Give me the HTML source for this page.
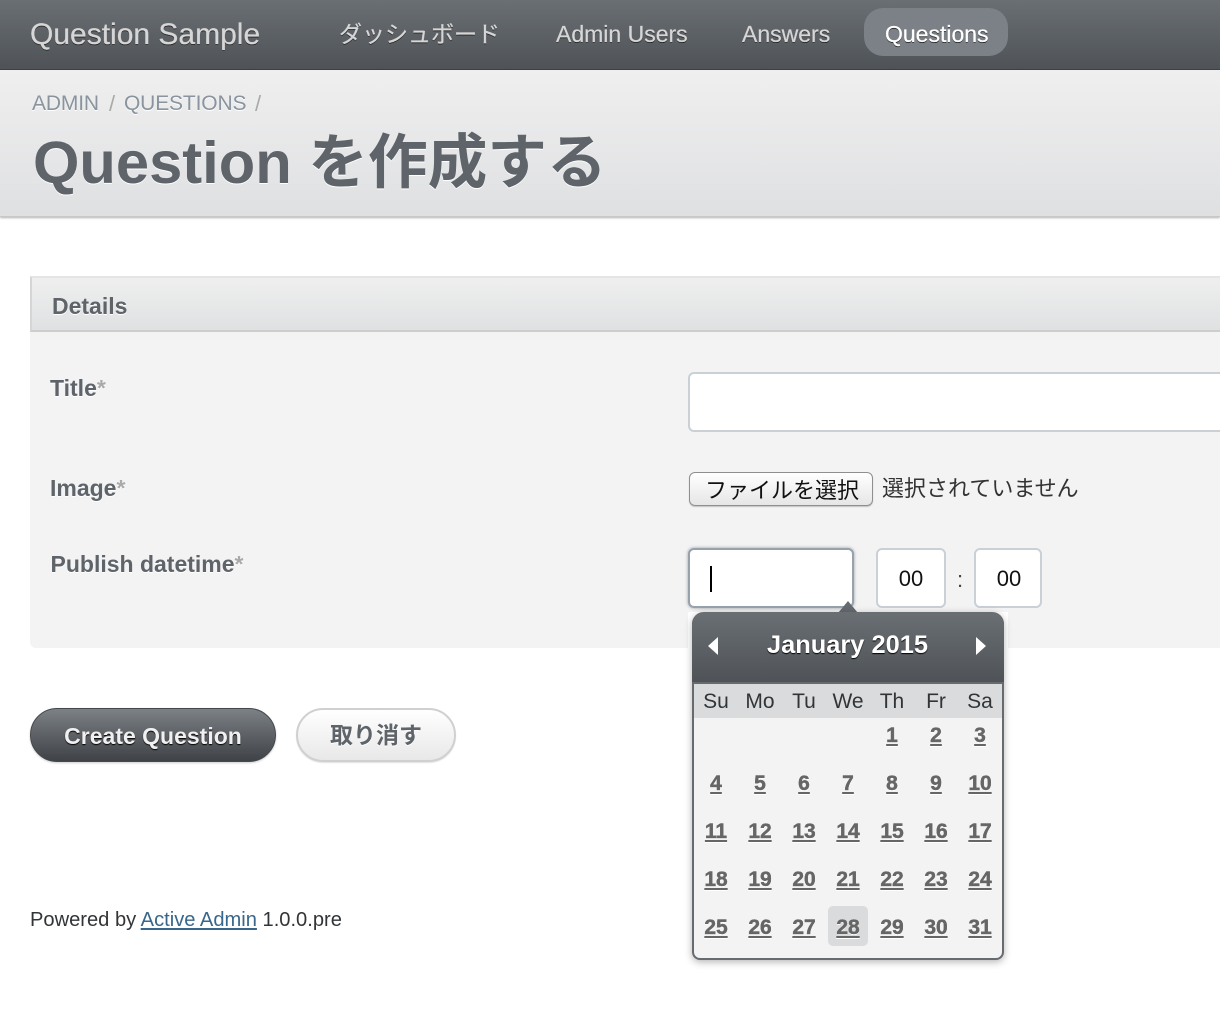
<!DOCTYPE html>
<html lang="ja">
<head>
<meta charset="utf-8">
<title>Question を作成する</title>
<style>
html,body{margin:0;padding:0;background:#fff;}
body{width:1220px;height:1034px;position:relative;overflow:hidden;font-family:"Liberation Sans","Noto Sans CJK JP",sans-serif;color:#323537;}
.a{position:absolute;white-space:nowrap;line-height:1;}
.box{position:absolute;box-sizing:border-box;}
#nav{left:0;top:0;width:1220px;height:70px;background:linear-gradient(#6a6f74,#4f5357);border-bottom:1px solid #3f4245;}
.nv{color:#d6d6d6;text-shadow:0 1px 0 #222;font-size:23px;-webkit-text-stroke:.25px currentColor;}
#tb{left:0;top:70px;width:1220px;height:147px;background:linear-gradient(#efefef,#dfe0e2);border-bottom:1px solid #c8c8c8;box-shadow:0 1px 2px rgba(0,0,0,.3);}
#panel{left:30px;top:276px;width:1200px;height:372px;background:#f3f3f3;border-radius:6px;}
#ph{left:30px;top:276px;width:1200px;height:56px;background:linear-gradient(#efefef,#dfe1e2);border:2px solid #e4e5e6;border-bottom:2px solid #cdcdcd;border-left:2px solid #d6d6d6;}
.lb{color:#5e6469;font-weight:bold;font-size:23px;text-shadow:0 1px 0 #fff;}
.lb i{font-style:normal;color:#aaa;}
.inp{background:#fff;border:2px solid #c9d0d6;border-radius:6px;}
.cell{position:absolute;width:44px;text-align:center;line-height:1;font-size:21px;font-weight:bold;color:#666;text-decoration:underline;text-shadow:0 1px 0 #fff;-webkit-text-stroke:.3px #666;}
.wd{position:absolute;width:44px;text-align:center;top:691px;font-size:21px;line-height:1;color:#323537;}
</style>
</head>
<body>
<div class="box" id="nav"></div>
<div class="a nv" style="left:30px;top:20px;font-size:30px;">Question Sample</div>
<div class="a nv" style="left:339px;top:23px;font-size:23px;">ダッシュボード</div>
<div class="a nv" style="left:556px;top:23px;">Admin Users</div>
<div class="a nv" style="left:742px;top:23px;">Answers</div>
<div class="box" style="left:864px;top:8px;width:144px;height:48px;background:#7b8187;border-radius:19px;"></div>
<div class="a nv" style="left:885px;top:23px;color:#fff;">Questions</div>

<div class="box" id="tb"></div>
<div class="a" style="left:32px;top:93px;font-size:21px;letter-spacing:-.15px;color:#8a949e;text-shadow:0 1px 0 #fff;">ADMIN</div>
<div class="a" style="left:109px;top:93px;font-size:22px;color:#aaa;">/</div>
<div class="a" style="left:124px;top:93px;font-size:21px;letter-spacing:-.15px;color:#8a949e;text-shadow:0 1px 0 #fff;">QUESTIONS</div>
<div class="a" style="left:255px;top:93px;font-size:22px;color:#aaa;">/</div>
<div class="a" style="left:33px;top:133px;font-size:59.7px;font-weight:bold;color:#5e6469;text-shadow:0 1px 0 #fff;">Question を作成する</div>

<div class="box" id="panel"></div>
<div class="box" id="ph"></div>
<div class="a" style="left:52px;top:295px;font-size:23px;font-weight:bold;color:#5e6469;text-shadow:0 1px 0 #fff;">Details</div>

<div class="a lb" style="left:50px;top:377px;">Title<i>*</i></div>
<div class="a lb" style="left:50px;top:477px;">Image<i>*</i></div>
<div class="a lb" style="left:50.5px;top:553px;">Publish datetime<i>*</i></div>

<div class="box inp" style="left:688px;top:372px;width:560px;height:60px;"></div>

<div class="box" style="left:689px;top:472px;width:184px;height:34px;background:linear-gradient(#fff,#e6e6e6);border:1px solid #8f8f8f;border-radius:6px;box-shadow:0 1px 1px rgba(0,0,0,.2);"></div>
<div class="a" style="left:705px;top:480px;font-size:22px;color:#111;">ファイルを選択</div>
<div class="a" style="left:882px;top:478px;font-size:22px;color:#333;">選択されていません</div>

<div class="box inp" style="left:688px;top:548px;width:166px;height:60px;border-color:#98a2ad;box-shadow:0 0 3px rgba(90,100,115,.6);"></div>
<div class="box" style="left:710px;top:566px;width:2px;height:26px;background:#000;"></div>
<div class="box inp" style="left:876px;top:548px;width:70px;height:60px;"></div>
<div class="a" style="left:876px;width:70px;text-align:center;top:568px;font-size:22px;color:#111;">00</div>
<div class="a" style="left:957px;top:569px;font-size:22px;color:#444;">:</div>
<div class="box inp" style="left:974px;top:548px;width:68px;height:60px;"></div>
<div class="a" style="left:975px;width:68px;text-align:center;top:568px;font-size:22px;color:#111;">00</div>

<div class="box" style="left:30px;top:708px;width:246px;height:54px;border-radius:27px;background:linear-gradient(#7c8186,#3f4246);border:1px solid #45484c;box-shadow:0 1px 2px rgba(0,0,0,.2);"></div>
<div class="a" style="left:30px;width:246px;text-align:center;top:725px;font-size:23px;font-weight:bold;color:#f0f0f0;text-shadow:0 1px 1px #000;">Create Question</div>
<div class="box" style="left:296px;top:708px;width:160px;height:54px;border-radius:27px;background:linear-gradient(#fff,#e8e8e8);border:2px solid #d0d0d0;box-shadow:0 1px 1px rgba(0,0,0,.12);"></div>
<div class="a" style="left:296px;width:160px;text-align:center;top:724px;font-size:23px;font-weight:bold;color:#5e6469;text-shadow:0 1px 0 #fff;">取り消す</div>

<div class="a" style="left:30px;top:910px;font-size:20.13px;color:#323537;">Powered by <span style="color:#38678b;text-decoration:underline;">Active Admin</span> 1.0.0.pre</div>

<!-- datepicker -->
<div class="box" style="left:688px;top:612px;width:320px;height:36px;background:#fff;"></div>
<svg class="box" style="left:838px;top:600px;" width="20" height="13" viewBox="0 0 20 13"><path d="M0 13 L10 1 L20 13 Z" fill="#666b70"/></svg>
<div class="box" style="left:692px;top:612px;width:312px;height:348px;background:#f3f3f3;border:2px solid #666b70;border-top:0;border-radius:12px 12px 8px 8px;box-shadow:0 2px 8px rgba(0,0,0,.3);"></div>
<div class="box" style="left:692px;top:612px;width:312px;height:72px;background:linear-gradient(#6a6f74,#4f5357);border-radius:12px 12px 0 0;border-bottom:2px solid #666b70;"></div>
<div class="box" style="left:694px;top:684px;width:308px;height:34px;background:#dadbdd;"></div>
<svg class="box" style="left:706px;top:635px;" width="14" height="22" viewBox="0 0 14 22"><path d="M12 2 L2 11 L12 20 Z" fill="#fff"/></svg>
<svg class="box" style="left:974px;top:635px;" width="14" height="22" viewBox="0 0 14 22"><path d="M2 2 L12 11 L2 20 Z" fill="#fff"/></svg>
<div class="a" style="left:692px;width:311px;text-align:center;top:633px;font-size:25.4px;font-weight:bold;color:#fff;text-shadow:0 1px 1px #000;">January 2015</div>

<div class="wd" style="left:694px;">Su</div>
<div class="wd" style="left:738px;">Mo</div>
<div class="wd" style="left:782px;">Tu</div>
<div class="wd" style="left:826px;">We</div>
<div class="wd" style="left:870px;">Th</div>
<div class="wd" style="left:914px;">Fr</div>
<div class="wd" style="left:958px;">Sa</div>

<div class="box" style="left:828px;top:906px;width:40px;height:40px;background:#dadbdd;border-radius:5px;"></div>

<div class="cell" style="left:870px;top:725px;">1</div>
<div class="cell" style="left:914px;top:725px;">2</div>
<div class="cell" style="left:958px;top:725px;">3</div>

<div class="cell" style="left:694px;top:773px;">4</div>
<div class="cell" style="left:738px;top:773px;">5</div>
<div class="cell" style="left:782px;top:773px;">6</div>
<div class="cell" style="left:826px;top:773px;">7</div>
<div class="cell" style="left:870px;top:773px;">8</div>
<div class="cell" style="left:914px;top:773px;">9</div>
<div class="cell" style="left:958px;top:773px;">10</div>

<div class="cell" style="left:694px;top:821px;">11</div>
<div class="cell" style="left:738px;top:821px;">12</div>
<div class="cell" style="left:782px;top:821px;">13</div>
<div class="cell" style="left:826px;top:821px;">14</div>
<div class="cell" style="left:870px;top:821px;">15</div>
<div class="cell" style="left:914px;top:821px;">16</div>
<div class="cell" style="left:958px;top:821px;">17</div>

<div class="cell" style="left:694px;top:869px;">18</div>
<div class="cell" style="left:738px;top:869px;">19</div>
<div class="cell" style="left:782px;top:869px;">20</div>
<div class="cell" style="left:826px;top:869px;">21</div>
<div class="cell" style="left:870px;top:869px;">22</div>
<div class="cell" style="left:914px;top:869px;">23</div>
<div class="cell" style="left:958px;top:869px;">24</div>

<div class="cell" style="left:694px;top:917px;">25</div>
<div class="cell" style="left:738px;top:917px;">26</div>
<div class="cell" style="left:782px;top:917px;">27</div>
<div class="cell" style="left:826px;top:917px;">28</div>
<div class="cell" style="left:870px;top:917px;">29</div>
<div class="cell" style="left:914px;top:917px;">30</div>
<div class="cell" style="left:958px;top:917px;">31</div>
</body>
</html>
